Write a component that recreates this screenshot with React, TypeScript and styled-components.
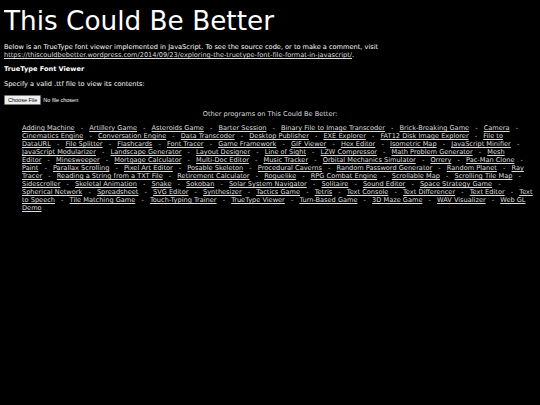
import React from 'react'
import styled, { createGlobalStyle } from 'styled-components'

const GlobalStyle = createGlobalStyle`
  body {
    margin: 4px;
    background: #000;
    color: #fff;
    font-family: "DejaVu Sans", Verdana, sans-serif;
    font-size: 6.6px;
  }
`

const Title = styled.h1`
  font-size: 26.3px;
  font-weight: normal;
  margin: 1px 0 6px 0;
  line-height: 32px;
`

const Para = styled.p<{ $after?: number }>`
  margin: 0 0 ${({ $after }) => $after ?? 6}px 0;
  line-height: 8px;
`

const Link = styled.a`
  color: #ddd;
  text-decoration: underline;
`

const Heading = styled.h2`
  font-size: 6.6px;
  font-weight: bold;
  margin: 0 0 7px 0;
  line-height: 8px;
`

const FileInput = styled.input`
  display: block;
  font-size: 5.5px;
  font-family: "Liberation Sans", Arial, sans-serif;
  color: #fff;
  margin: 0;

  &::file-selector-button {
    font-size: 5.5px;
    padding: 1px 3px;
    margin-right: 2px;
    border: 1px solid #767676;
    border-radius: 1px;
    background: #efefef;
    color: #000;
  }
`

const Others = styled.div`
  margin-top: 5px;
  color: #ddd;
`

const OthersTitle = styled.p`
  text-align: center;
  margin: 0 0 6px 0;
  line-height: 8px;
`

const LinkList = styled.div`
  padding: 0 0 0 18px;
  line-height: 8px;
`

// the dash sticks to the link before it, so a line only breaks after it
const Sep = styled.span`
  margin: 0 4px;
`

const programs = [
  'Adding Machine', 'Artillery Game', 'Asteroids Game', 'Barter Session',
  'Binary File to Image Transcoder', 'Brick-Breaking Game', 'Camera',
  'Cinematics Engine', 'Conversation Engine', 'Data Transcoder', 'Desktop Publisher',
  'EXE Explorer', 'FAT12 Disk Image Explorer', 'File to DataURL', 'File Splitter',
  'Flashcards', 'Font Tracer', 'Game Framework', 'GIF Viewer', 'Hex Editor',
  'Isometric Map', 'JavaScript Minifier', 'JavaScript Modularizer', 'Landscape Generator',
  'Layout Designer', 'Line of Sight', 'LZW Compressor', 'Math Problem Generator',
  'Mesh Editor', 'Minesweeper', 'Mortgage Calculator', 'Multi-Doc Editor', 'Music Tracker',
  'Orbital Mechanics Simulator', 'Orrery', 'Pac-Man Clone', 'Paint', 'Parallax Scrolling',
  'Pixel Art Editor', 'Posable Skeleton', 'Procedural Caverns', 'Random Password Generator',
  'Random Planet', 'Ray Tracer', 'Reading a String from a TXT File', 'Retirement Calculator',
  'Roguelike', 'RPG Combat Engine', 'Scrollable Map', 'Scrolling Tile Map', 'Sidescroller',
  'Skeletal Animation', 'Snake', 'Sokoban', 'Solar System Navigator', 'Solitaire',
  'Sound Editor', 'Space Strategy Game', 'Spherical Network', 'Spreadsheet', 'SVG Editor',
  'Synthesizer', 'Tactics Game', 'Tetris', 'Text Console', 'Text Differencer', 'Text Editor',
  'Text to Speech', 'Tile Matching Game', 'Touch-Typing Trainer', 'TrueType Viewer',
  'Turn-Based Game', '3D Maze Game', 'WAV Visualizer', 'Web GL Demo',
]

export default function App() {
  return (
    <>
      <GlobalStyle />
      <Title>This Could Be Better</Title>
      <Para>
        Below is an TrueType font viewer implemented in JavaScript. To see the source code, or to make a comment, visit{' '}
        <Link href="#">https://thiscouldbebetter.wordpress.com/2014/09/23/exploring-the-truetype-font-file-format-in-javascript/</Link>.
      </Para>
      <Heading>TrueType Font Viewer</Heading>
      <Para $after={7}>Specify a valid .ttf file to view its contents:</Para>
      <FileInput type="file" />
      <Others>
        <OthersTitle>Other programs on This Could Be Better:</OthersTitle>
        <LinkList>
          {programs.map((name, i) => (
            <React.Fragment key={name}>
              <Link href="#">{name}</Link>
              {i < programs.length - 1 && (
                <>
                  <Sep>{'\u00a0-'}</Sep>{' '}
                </>
              )}
            </React.Fragment>
          ))}
        </LinkList>
      </Others>
    </>
  )
}
